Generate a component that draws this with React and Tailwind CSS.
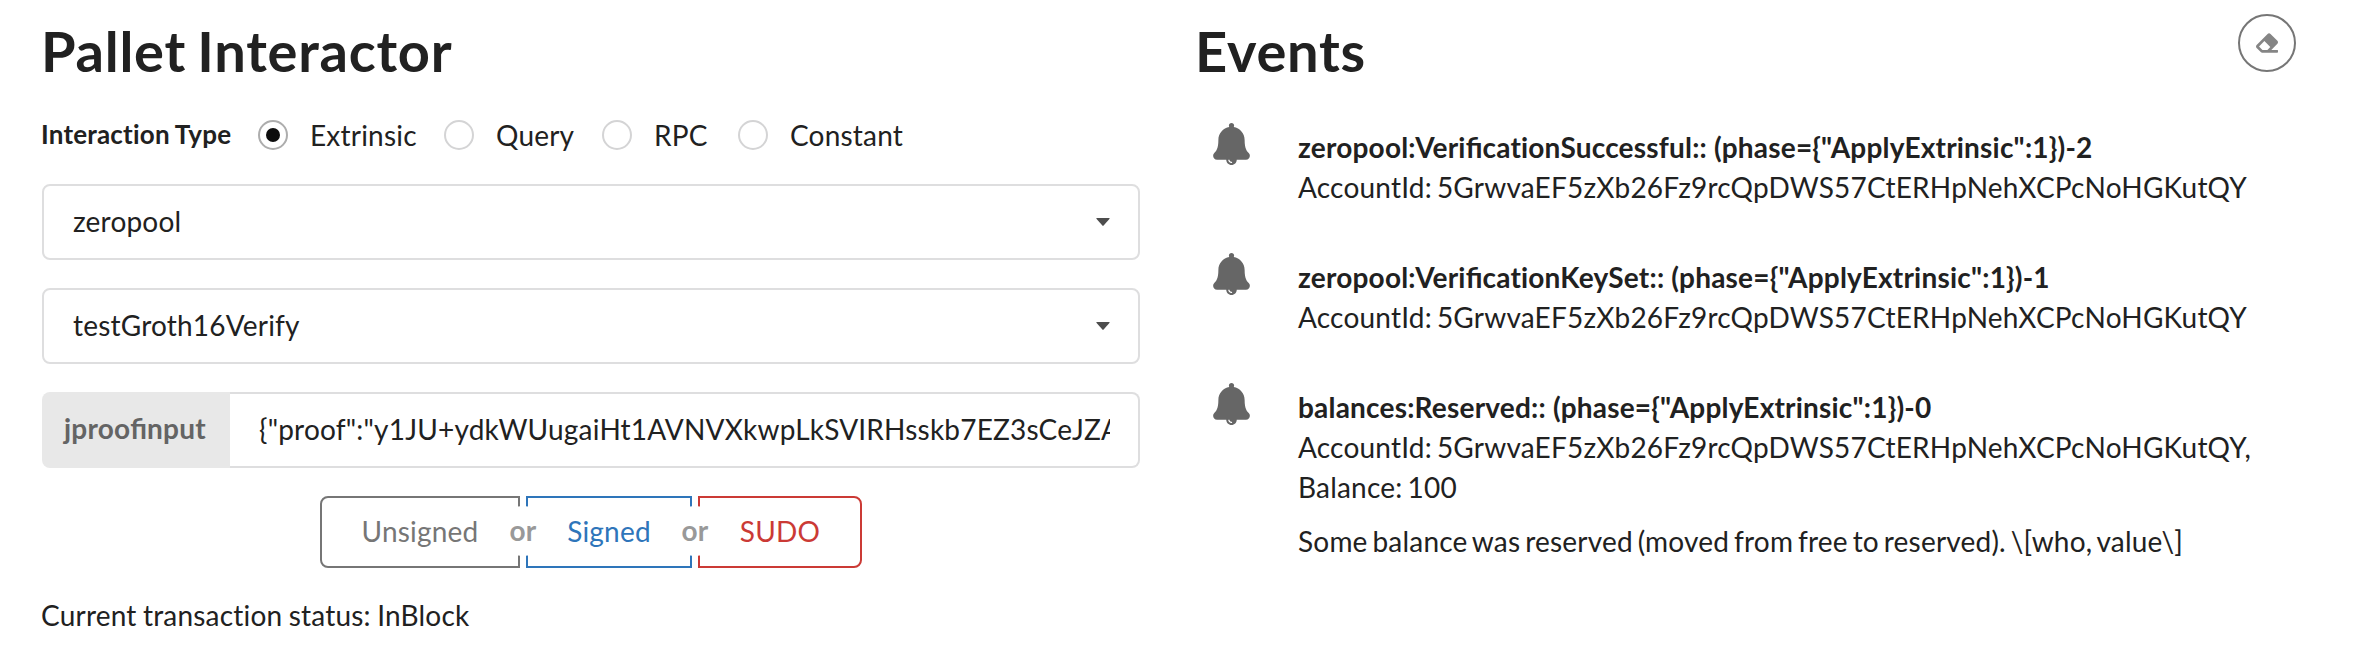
const BELL =
  "M433.884 366.059C411.634 343.809 384 316.118 384 208c0-79.394-57.831-145.269-133.663-157.83A31.845 31.845 0 0 0 256 32c0-17.673-14.327-32-32-32s-32 14.327-32 32c0 6.75 2.095 13.008 5.663 18.17C121.831 62.731 64 128.606 64 208c0 108.118-27.643 135.809-49.893 158.059C-16.042 396.208 5.325 448 48.048 448H160c0 35.346 28.654 64 64 64s64-28.654 64-64h111.943c42.638 0 64.151-51.731 33.941-81.941zM224 472a8 8 0 0 1 0 16c-22.056 0-40-17.944-40-40h16c0 13.234 10.766 24 24 24z";
const ERASER =
  "M497.941 273.941c18.745-18.745 18.745-49.137 0-67.882l-160-160c-18.745-18.745-49.136-18.746-67.883 0l-256 256c-18.745 18.745-18.745 49.137 0 67.882l96 96A48.004 48.004 0 0 0 144 480h356c6.627 0 12-5.373 12-12v-40c0-6.627-5.373-12-12-12H355.883l142.058-142.059zm-302.627-62.627l137.373 137.373L265.373 416H150.628l-80-80 124.686-124.686z";

const ACCOUNT = "AccountId: 5GrwvaEF5zXb26Fz9rcQpDWS57CtERHpNehXCPcNoHGKutQY";

const EVENTS = [
  { title: 'zeropool:VerificationSuccessful:: (phase={"ApplyExtrinsic":1})-2', lines: [ACCOUNT] },
  { title: 'zeropool:VerificationKeySet:: (phase={"ApplyExtrinsic":1})-1', lines: [ACCOUNT] },
  {
    title: 'balances:Reserved:: (phase={"ApplyExtrinsic":1})-0',
    lines: [ACCOUNT + ",", "Balance: 100"],
    note: "Some balance was reserved (moved from free to reserved). \\[who, value\\]",
  },
];

// Tracked text loses its ligatures; "fi" keeps its own by resetting the tracking.
function Ligated({ text }) {
  return text.split(/(fi)/).map((part, i) =>
    part === "fi" ? (
      <span key={i} className="tracking-normal">
        fi
      </span>
    ) : (
      part
    ),
  );
}

function Radio({ label, checked, className }) {
  return (
    <label className={"flex items-center " + className}>
      <span
        className={
          "flex size-[30px] shrink-0 items-center justify-center rounded-full border-2 " +
          (checked ? "border-[#adadad]" : "border-[#d4d4d5]")
        }
      >
        {checked && <span className="size-[14px] rounded-full bg-[#0d0d0d]" />}
      </span>
      <span className="ml-[22px] whitespace-nowrap">{label}</span>
    </label>
  );
}

function Dropdown({ value }) {
  return (
    <div className="flex h-[76px] items-center justify-between rounded-lg border-2 border-[#dededf] pr-7 pl-[29px]">
      <span className="pb-[2px]">{value}</span>
      <svg className="h-2 w-[14px]" viewBox="0 0 14 8">
        <path d="M0.8 0H13.2Q14 0.3 13.4 1L7.6 7.6Q7 8.2 6.4 7.6L0.6 1Q0 0.3 0.8 0Z" fill="#4d4d4d" />
      </svg>
    </div>
  );
}

function Or() {
  return (
    <div className="relative w-[6px]">
      <span className="absolute top-[10px] left-[-22px] z-10 flex size-[50px] items-center justify-center rounded-full bg-white pb-[2px] font-bold text-[#999999]">
        or
      </span>
    </div>
  );
}

export default function App() {
  return (
    <div className="flex h-[660px] w-[2358px] overflow-hidden bg-white pl-[42px] font-['Lato',sans-serif] text-[28px] leading-[40px] tracking-[0.2px] text-[#212121] [word-spacing:-2.3px]">
      <section className="w-[1098px]">
        <h1 className="mt-[15px] -ml-px text-[56px] leading-[72px] font-bold tracking-[0.75px] [word-spacing:-3px]">
          Pallet Interactor
        </h1>
        <div className="mt-[28px] flex h-10 items-center">
          <span className="-ml-px w-[217px] pb-[2px] text-[26px] font-bold whitespace-nowrap [word-spacing:-0.8px]">
            Interaction Type
          </span>
          <Radio label="Extrinsic" checked className="w-[186px]" />
          <Radio label="Query" className="w-[158px]" />
          <Radio label="RPC" className="w-[136px]" />
          <Radio label="Constant" className="" />
        </div>
        <div className="mt-[29px] flex flex-col gap-7">
          <Dropdown value="zeropool" />
          <Dropdown value="testGroth16Verify" />
          <div className="flex h-[76px]">
            <div className="flex w-[188px] items-center rounded-l-lg bg-[#e8e8e8] pb-1 pl-[22px] font-bold text-[#646464]">
              <span>
                <Ligated text="jproofinput" />
              </span>
            </div>
            <div className="flex min-w-0 flex-1 items-center rounded-r-lg border-2 border-l-0 border-[#dededf] pr-7 pl-[29px]">
              <div className="overflow-hidden pb-[2px] whitespace-nowrap">
                {'{"proof":"y1JU+ydkWUugaiHt1AVNVXkwpLkSVIRHsskb7EZ3sCeJZA'}
              </div>
            </div>
          </div>
        </div>
        <div className="mt-7 ml-[278px] flex h-[72px]">
          <button className="w-[200px] rounded-l-lg border-2 border-[#767676] pb-[2px] text-[#767676]">Unsigned</button>
          <Or />
          <button className="w-[166px] border-2 border-[#2e75ba] pb-[2px] text-[#2e75ba]">Signed</button>
          <Or />
          <button className="w-[164px] rounded-r-lg border-2 border-[#cb3a35] pb-[2px] text-[#cb3a35]">SUDO</button>
        </div>
        <p className="mt-[27px] -ml-px [word-spacing:-1px]">Current transaction status: InBlock</p>
      </section>

      <section className="ml-[55px] w-[1101px]">
        <div className="flex items-start justify-between">
          <h1 className="mt-[15px] text-[56px] leading-[72px] font-bold tracking-[0.75px]">Events</h1>
          <button className="mt-[14px] flex size-[58px] items-center justify-center rounded-full border-2 border-[#767676]">
            <svg className="size-[22px]" viewBox="0 0 512 512" fill="#858585">
              <path d={ERASER} />
            </svg>
          </button>
        </div>
        <div className="mt-[36px] flex flex-col gap-[46px]">
          {EVENTS.map((e) => (
            <div key={e.title} className="flex">
              <svg className="ml-[18px] h-[42px] w-[37px] shrink-0" viewBox="0 0 448 512" fill="#666666">
                <path d={BELL} />
              </svg>
              <div className="mt-1 ml-[48px] whitespace-nowrap">
                <div className="font-bold [word-spacing:0px]">
                  <Ligated text={e.title} />
                </div>
                {e.lines.map((l) => (
                  <div key={l}>{l}</div>
                ))}
                {e.note && <div className="mt-[14px] [word-spacing:-2.5px]">{e.note}</div>}
              </div>
            </div>
          ))}
        </div>
      </section>
    </div>
  );
}
